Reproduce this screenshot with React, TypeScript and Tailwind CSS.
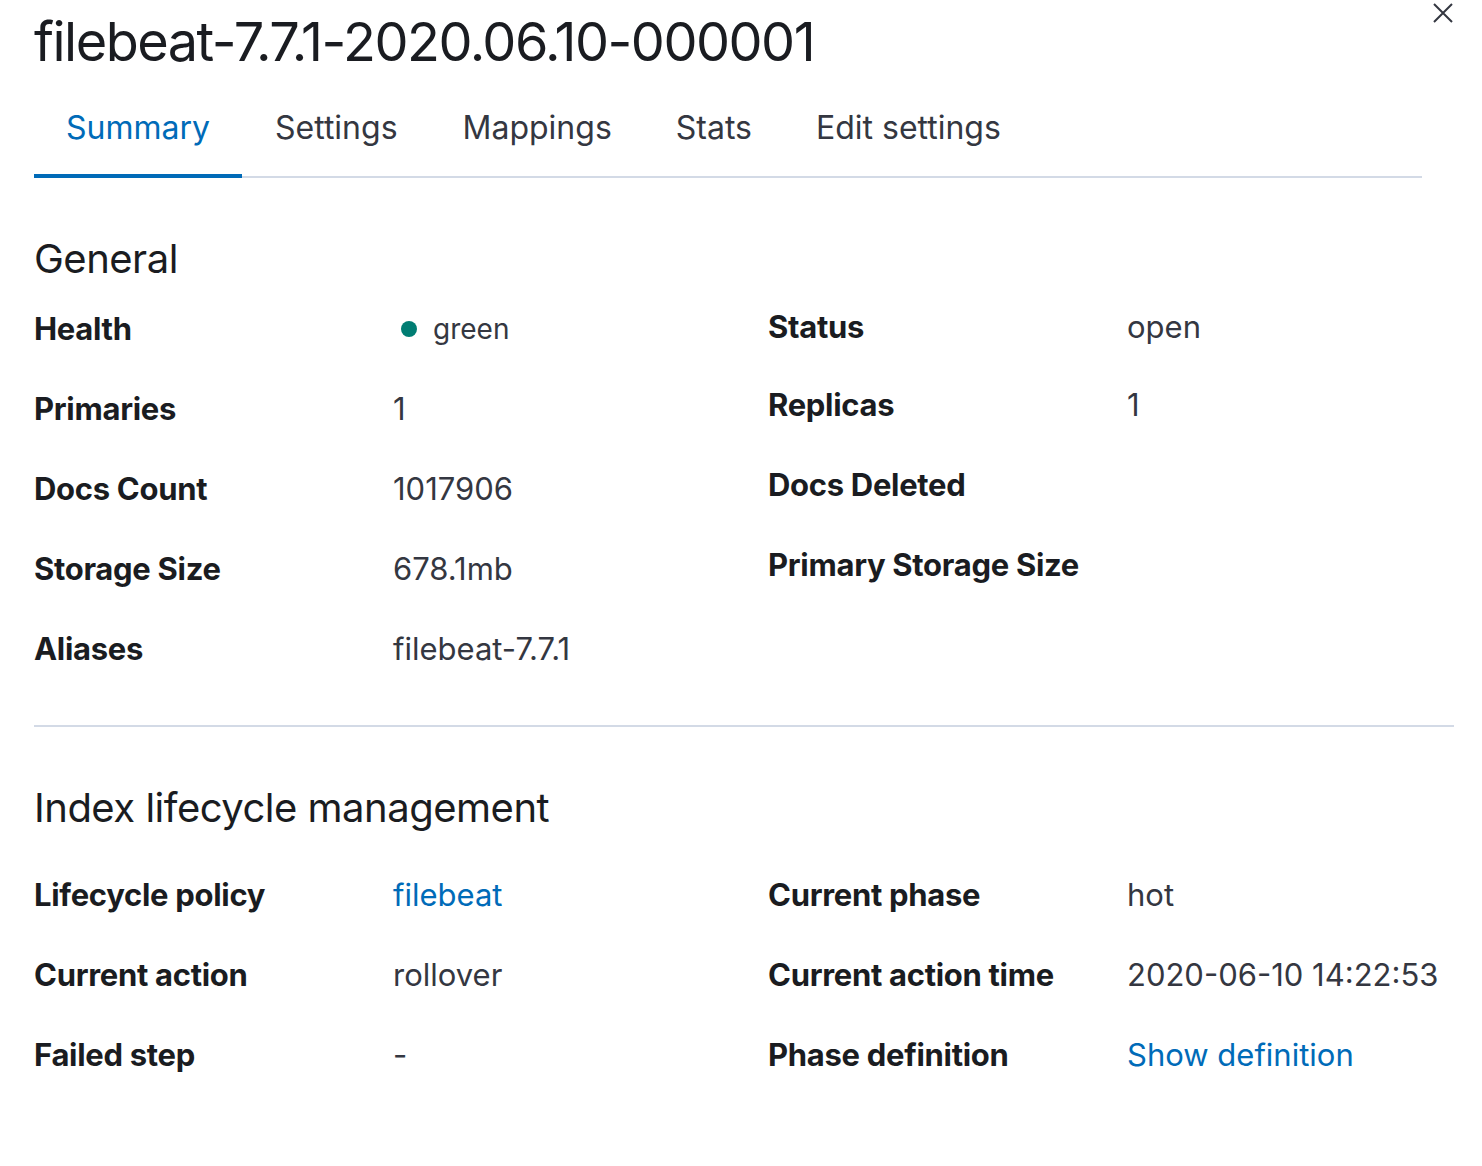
const font = { fontFamily: 'Inter, "Noto Sans", sans-serif' };

function Row({ label, value }: { label: string; value: React.ReactNode }) {
  return (
    <div className="flex h-[80px] items-center">
      <div className="w-[359px] shrink-0 text-[31px] font-bold tracking-[-0.3px] text-[#1a1c21]">{label}</div>
      <div className="text-[31px] text-[#343741]">{value}</div>
    </div>
  );
}

const link = (t: string) => <span className="text-[#006bb8]">{t}</span>;

export default function App() {
  return (
    <div style={font} className="relative h-[1166px] w-[1482px] overflow-hidden bg-white pl-[34px]">
      <svg className="absolute right-[28px] top-[2px]" width="22" height="22" viewBox="0 0 22 22">
        <path d="M2 2L20 20M20 2L2 20" stroke="#343741" strokeWidth="2" />
      </svg>
      <h1 className="pt-[8px] text-[54px] leading-[68px] tracking-[-1.5px] text-[#1a1c21]">filebeat-7.7.1-2020.06.10-000001</h1>
      <div className="mt-[28px] flex w-[1388px] border-b-2 border-[#d3dae6] text-[32px] text-[#343741]">
        <div className="border-b-4 border-[#006bb8] px-[32px] pb-[22px] -mb-[2px] text-[#006bb8]">Summary</div>
        <div className="px-[33px] pb-[22px]">Settings</div>
        <div className="px-[32px] pb-[22px]">Mappings</div>
        <div className="px-[32px] pb-[22px]">Stats</div>
        <div className="px-[32px] pb-[22px]">Edit settings</div>
      </div>
      <h2 className="mt-[56px] text-[40px] leading-[50px] tracking-[-0.5px] text-[#1a1c21]">General</h2>
      <div className="mt-[5px] grid grid-cols-[734px_1fr]">
        <div>
          <Row label="Health" value={<span className="flex items-center gap-[16px] pl-[8px]"><span className="h-[16px] w-[16px] rounded-full bg-[#017d73]" /><span className="text-[28px]">green</span></span>} />
          <Row label="Primaries" value="1" />
          <Row label="Docs Count" value="1017906" />
          <Row label="Storage Size" value="678.1mb" />
          <Row label="Aliases" value="filebeat-7.7.1" />
        </div>
        <div className="-mt-[2px]">
          <Row label="Status" value="open" />
          <div className="-mt-[2px]"><Row label="Replicas" value="1" /></div>
          <Row label="Docs Deleted" value="" />
          <Row label="Primary Storage Size" value="" />
        </div>
      </div>
      <div className="mt-[36px] w-[1420px] border-t-2 border-[#d3dae6]" />
      <h2 className="mt-[56px] text-[40px] leading-[50px] tracking-[-0.5px] text-[#1a1c21]">Index lifecycle management</h2>
      <div className="mt-[22px] grid grid-cols-[734px_1fr]">
        <div>
          <Row label="Lifecycle policy" value={link('filebeat')} />
          <Row label="Current action" value="rollover" />
          <Row label="Failed step" value="-" />
        </div>
        <div>
          <Row label="Current phase" value="hot" />
          <Row label="Current action time" value="2020-06-10 14:22:53" />
          <Row label="Phase definition" value={link('Show definition')} />
        </div>
      </div>
    </div>
  );
}
